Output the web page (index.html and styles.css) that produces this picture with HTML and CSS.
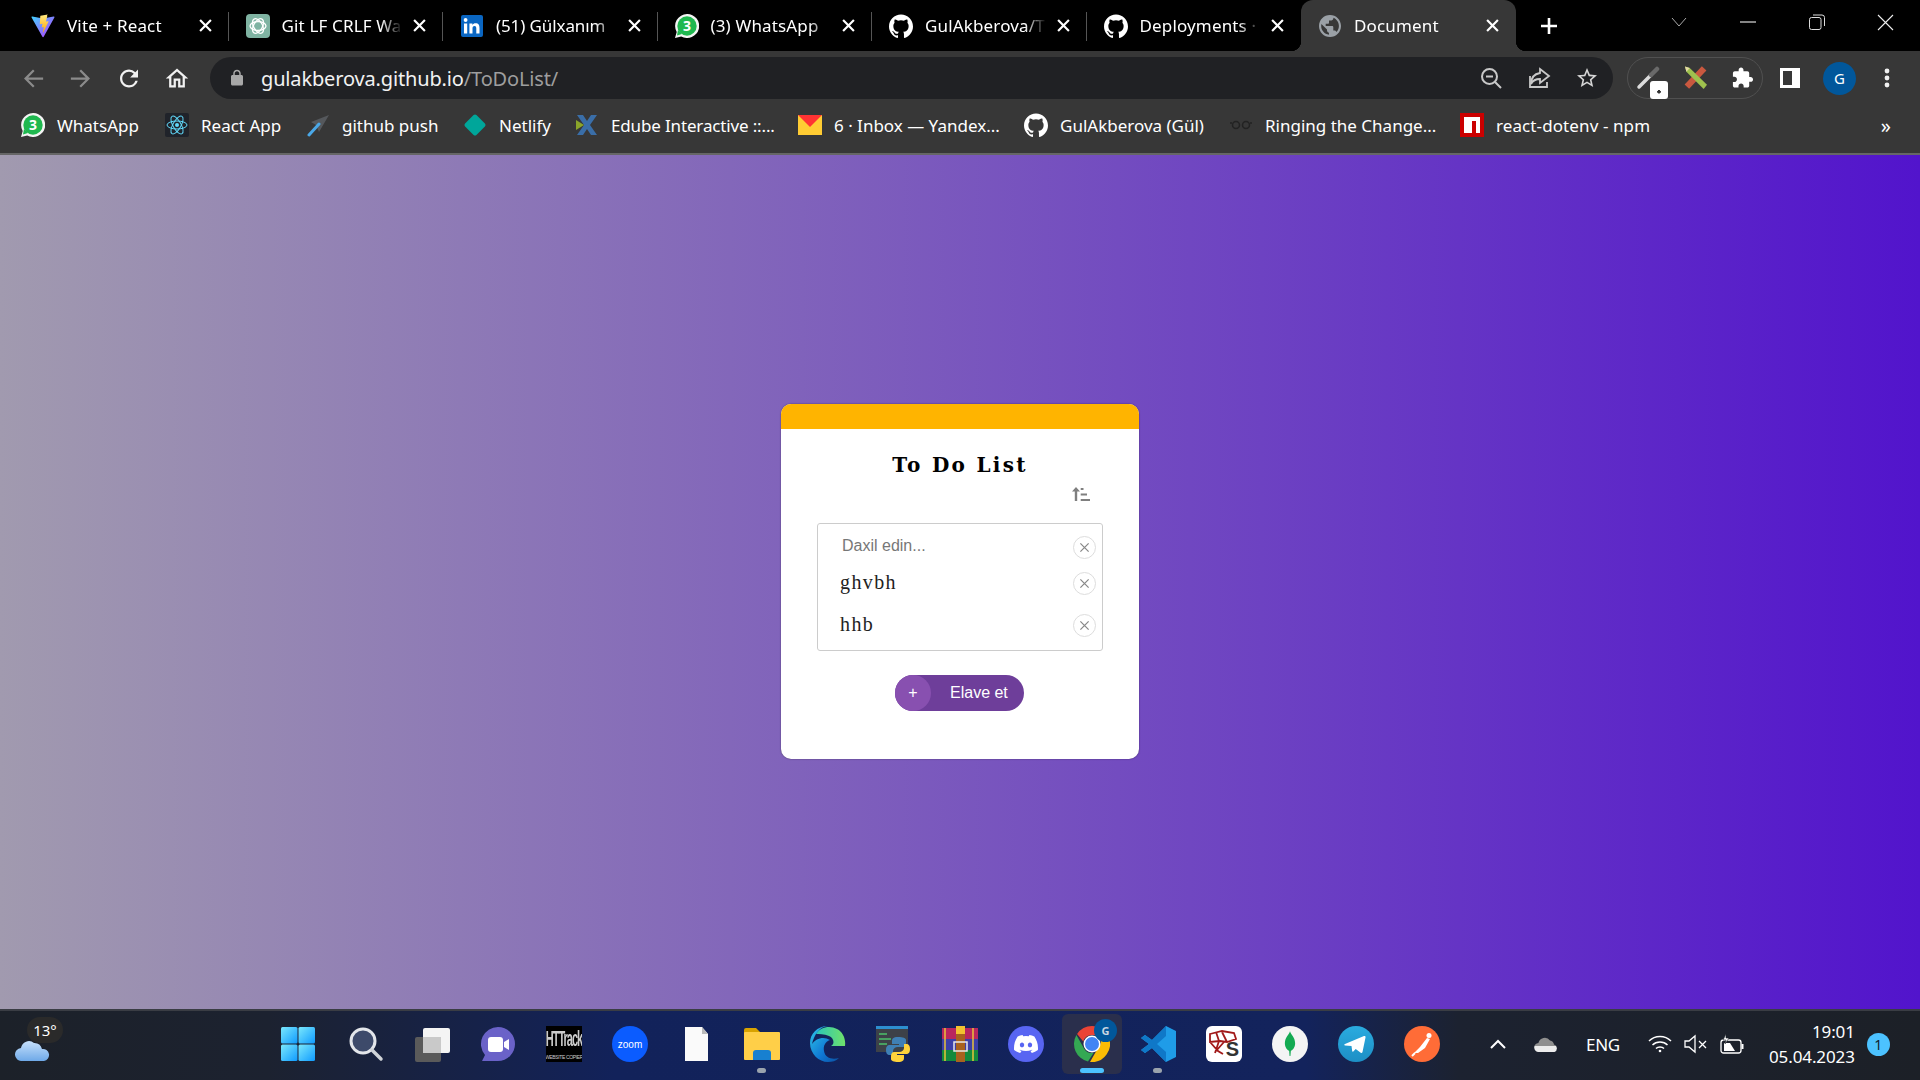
FILE: index.html
```html
<!DOCTYPE html>
<html lang="az">
<head>
<meta charset="utf-8">
<title>Document</title>
<link rel="stylesheet" href="styles.css">
</head>
<body>
<svg class="defs" aria-hidden="true">
  <defs>
    <linearGradient id="vite" x1="0" y1="0" x2="1" y2="1"><stop offset="0" stop-color="#41d1ff"/><stop offset="1" stop-color="#bd34fe"/></linearGradient>
    <linearGradient id="bolt" x1="0" y1="0" x2="0" y2="1"><stop offset="0" stop-color="#ffea83"/><stop offset="1" stop-color="#ffa800"/></linearGradient>
    <linearGradient id="start" x1="0" y1="0" x2="1" y2="1"><stop offset="0" stop-color="#7be8fc"/><stop offset="1" stop-color="#0f9bff"/></linearGradient>
    <linearGradient id="edge" x1="0" y1="0" x2="1" y2="1"><stop offset="0" stop-color="#2fc6e8"/><stop offset=".6" stop-color="#0f78d4"/><stop offset="1" stop-color="#0b4fa0"/></linearGradient>
    <linearGradient id="edge2" x1="0" y1="0" x2="1" y2="0"><stop offset="0" stop-color="#2bc4b8"/><stop offset="1" stop-color="#6fe26a"/></linearGradient>
    <linearGradient id="sky" x1="0" y1="0" x2="0" y2="1"><stop offset="0" stop-color="#c6e0fb"/><stop offset="1" stop-color="#6ea9e8"/></linearGradient>
    <linearGradient id="tele" x1="0" y1="0" x2="0" y2="1"><stop offset="0" stop-color="#2aabdf"/><stop offset="1" stop-color="#1d8fc5"/></linearGradient>
    <linearGradient id="drive" x1="0" y1="0" x2="0" y2="1"><stop offset=".58" stop-color="#8f8f8f"/><stop offset=".6" stop-color="#ececec"/></linearGradient>
    <symbol id="gh" viewBox="0 0 24 24"><path fill="#fff" d="M12 .5C5.37.5 0 5.87 0 12.5c0 5.3 3.44 9.8 8.2 11.4.6.1.82-.26.82-.58v-2.03c-3.34.73-4.04-1.61-4.04-1.61-.55-1.39-1.34-1.76-1.34-1.76-1.09-.75.08-.73.08-.73 1.2.08 1.84 1.24 1.84 1.24 1.07 1.83 2.81 1.3 3.5 1 .1-.78.42-1.31.76-1.61-2.67-.3-5.47-1.33-5.47-5.93 0-1.31.47-2.38 1.24-3.22-.14-.3-.54-1.52.1-3.18 0 0 1-.32 3.3 1.23a11.5 11.5 0 0 1 6 0c2.28-1.55 3.29-1.23 3.29-1.23.64 1.66.24 2.88.12 3.18a4.65 4.65 0 0 1 1.23 3.22c0 4.61-2.8 5.63-5.48 5.92.42.36.81 1.1.81 2.22v3.29c0 .32.22.69.83.57C20.56 22.3 24 17.8 24 12.5 24 5.87 18.63.5 12 .5z"/></symbol>
    <symbol id="wa" viewBox="0 0 24 24"><path fill="#f4f4f4" d="M12 0a12 12 0 0 0-10.3 18L0 24l6.2-1.6A12 12 0 1 0 12 0z"/><circle cx="12" cy="12" r="9.7" fill="#1fb84f"/><path fill="#1fb84f" d="M3 16l-1 5.4 5-1.4z"/><text x="12" y="17" text-anchor="middle" class="wa-num">3</text></symbol>
    <symbol id="xx" viewBox="0 0 12 12"><path d="M1 1l10 10M11 1L1 11" stroke="#fff" stroke-width="2" fill="none"/></symbol>
    <symbol id="del" viewBox="0 0 12 12"><path d="M1.5 1.5l9 9M10.5 1.5l-9 9" stroke="#8a8a8a" stroke-width="1.4" fill="none"/></symbol>
  </defs>
</svg>

<header class="tabstrip">
  <div class="tab">
    <svg class="favicon" viewBox="0 0 24 24"><path fill="url(#vite)" d="M23.4 3.6 12.7 22.8a.7.7 0 0 1-1.3 0L.6 3.6c-.3-.5.2-1.1.7-1L12 4.5l10.6-1.9c.6-.1 1 .5.8 1z"/><path fill="url(#bolt)" d="M16.8.4 9.5 1.8a.3.3 0 0 0-.2.3L8.8 10c0 .2.2.3.3.3l2-.5c.2 0 .4.2.3.4l-.6 3c0 .2.2.4.4.3l1.3-.4c.2 0 .4.1.3.3l-1 4.8c-.1.3.3.5.4.2l.1-.2 5.3-10.6c.1-.2-.1-.4-.3-.4l-2 .4c-.2 0-.4-.2-.3-.4l1.3-5.2c.1-.3-.1-.5-.4-.5z"/></svg>
    <span class="tab-title">Vite + React</span>
    <svg class="tab-x"><use href="#xx"/></svg>
  </div>
  <div class="tab">
    <svg class="favicon" viewBox="0 0 24 24"><rect width="24" height="24" rx="4" fill="#7fb3a2"/><g fill="none" stroke="#fff" stroke-width="1.3"><ellipse cx="12" cy="12" rx="8" ry="4.4"/><ellipse cx="12" cy="12" rx="8" ry="4.4" transform="rotate(60 12 12)"/><ellipse cx="12" cy="12" rx="8" ry="4.4" transform="rotate(120 12 12)"/></g></svg>
    <span class="tab-title">Git LF CRLF Wa</span>
    <svg class="tab-x"><use href="#xx"/></svg>
  </div>
  <div class="tab">
    <svg class="favicon" viewBox="0 0 24 24"><rect x="1" y="1" width="22" height="22" rx="2" fill="#0a66c2"/><rect x="4" y="9.5" width="3.2" height="10" fill="#fff"/><circle cx="5.6" cy="6" r="1.9" fill="#fff"/><path fill="#fff" d="M9.4 9.5h3v1.4c.6-1 1.7-1.7 3.2-1.7 3 0 3.9 2 3.9 4.8v5.5h-3.2v-4.9c0-1.3-.3-2.6-1.8-2.6s-2 1.2-2 2.6v4.9H9.4z"/></svg>
    <span class="tab-title tab-title-plain">(51) Gülxanım</span>
    <svg class="tab-x"><use href="#xx"/></svg>
  </div>
  <div class="tab">
    <svg class="favicon"><use href="#wa"/></svg>
    <span class="tab-title">(3) WhatsApp</span>
    <svg class="tab-x"><use href="#xx"/></svg>
  </div>
  <div class="tab">
    <svg class="favicon"><use href="#gh"/></svg>
    <span class="tab-title">GulAkberova/T</span>
    <svg class="tab-x"><use href="#xx"/></svg>
  </div>
  <div class="tab tab-last">
    <svg class="favicon"><use href="#gh"/></svg>
    <span class="tab-title">Deployments ·</span>
    <svg class="tab-x"><use href="#xx"/></svg>
  </div>
  <div class="tab tab-active">
    <svg class="favicon" viewBox="0 0 24 24"><path fill="#9aa0a6" d="M12 1C5.9 1 1 5.9 1 12s4.9 11 11 11 11-4.9 11-11S18.100 1 12 1zm-1.100 19.700c-4.300-.5-7.700-4.200-7.700-8.700 0-.7.1-1.300.2-2L9 15.500v1.100c0 1.200 1 2.200 2 2.200zm7.600-2.800c-.3-.9-1.100-1.500-2.100-1.500h-1.100v-3.300c0-.6-.5-1.100-1.100-1.100H7.700V9.800h2.200c.6 0 1.100-.5 1.100-1.100V6.500h2.200c1.200 0 2.200-1 2.200-2.200v-.5c3.200 1.300 5.500 4.500 5.500 8.200 0 2.300-.9 4.400-2.400 5.900z"/></svg>
    <span class="tab-title">Document</span>
    <svg class="tab-x"><use href="#xx"/></svg>
  </div>
  <svg class="newtab" viewBox="0 0 20 20"><path d="M10 2v16M2 10h16" stroke="#fff" stroke-width="2.6"/></svg>
  <div class="winctl">
    <span class="winbtn"><svg width="16" height="10" viewBox="0 0 16 10"><path d="M1 1l7 8 7-8" fill="none" stroke="#aaa" stroke-width="1"/></svg></span>
    <span class="winbtn"><svg width="16" height="2" viewBox="0 0 16 2"><path d="M0 1h16" stroke="#ddd" stroke-width="1.2"/></svg></span>
    <span class="winbtn"><svg width="16" height="16" viewBox="0 0 16 16"><rect x=".5" y="3.500" width="11.500" height="12" rx="2" fill="none" stroke="#ddd"/><path d="M4 1h9a2.500 2.500 0 0 1 2.500 2.500V12" fill="none" stroke="#ddd"/></svg></span>
    <span class="winbtn"><svg width="17" height="17" viewBox="0 0 17 17"><path d="M1 1l15 15M16 1L1 16" stroke="#eee" stroke-width="1.1"/></svg></span>
  </div>
</header>

<nav class="toolbar">
  <svg class="navicon" viewBox="0 0 24 24"><path fill="#8b8b8b" d="M21 11H7.800l5.600-5.600L12 4l-8 8 8 8 1.400-1.400L7.800 13H21z"/></svg>
  <svg class="navicon" viewBox="0 0 24 24"><path fill="#8b8b8b" d="M3 11h13.200l-5.600-5.600L12 4l8 8-8 8-1.400-1.400 5.600-5.600H3z"/></svg>
  <svg class="navicon" viewBox="0 0 24 24"><path fill="#f1f1f1" d="M17.650 6.350A7.958 7.958 0 0 0 12 4c-4.420 0-7.990 3.580-7.990 8s3.570 8 7.990 8c3.730 0 6.840-2.550 7.730-6h-2.080A5.990 5.990 0 0 1 12 18c-3.310 0-6-2.690-6-6s2.690-6 6-6c1.660 0 3.140.690 4.220 1.780L13 11h7V4l-2.350 2.350z"/></svg>
  <svg class="navicon" viewBox="0 0 24 24"><path fill="#f1f1f1" d="M12 5.690l5 4.500V18h-2v-6H9v6H7v-7.810l5-4.500M12 3 2 12h3v8h6v-6h2v6h6v-8h3L12 3z"/></svg>
  <div class="omnibox">
    <svg class="lock" viewBox="0 0 24 24"><path fill="#a8a8a8" d="M18 8h-1V6c0-2.760-2.240-5-5-5S7 3.240 7 6v2H6c-1.100 0-2 .9-2 2v10c0 1.100.9 2 2 2h12c1.100 0 2-.9 2-2V10c0-1.100-.9-2-2-2zM9 6c0-1.660 1.340-3 3-3s3 1.340 3 3v2H9V6z"/></svg>
    <span class="url">gulakberova.github.io<span class="url-path">/ToDoList/</span></span>
    <div class="omni-actions">
      <svg class="omni-icon" viewBox="0 0 24 24" fill="none" stroke="#c8c8c8" stroke-width="2"><circle cx="10.500" cy="10.500" r="7.500"/><path d="M16 16l6 6M7 10.500h7"/></svg>
      <svg class="omni-icon" viewBox="0 0 24 24" fill="none" stroke="#c8c8c8" stroke-width="1.800"><path d="M3 10v11h17v-5"/><path d="M13 3l9 7-9 7v-4c-4 0-7 1-9 5 0-6 3-10 9-11z"/></svg>
      <svg class="omni-icon" viewBox="0 0 24 24"><path fill="#d6d6d6" d="M22 9.240l-7.190-.62L12 2 9.190 8.630 2 9.240l5.460 4.730L5.820 21 12 17.270 18.180 21l-1.630-7.030L22 9.240zM12 15.400l-3.760 2.270 1-4.280-3.320-2.880 4.380-.38L12 6.100l1.710 4.040 4.380.38-3.320 2.880 1 4.280L12 15.400z"/></svg>
    </div>
  </div>
  <div class="ext-pill">
    <span class="ext">
      <svg class="ext-icon" viewBox="0 0 24 24"><path d="M3 21L15 9" stroke="#dcdcdc" stroke-width="3.500" stroke-linecap="round"/><path d="M15 9l6-6" stroke="#6a6a6a" stroke-width="4.500" stroke-linecap="round"/></svg>
      <span class="ext-badge"></span>
    </span>
    <svg class="ext-icon" viewBox="0 0 24 24"><path d="M21 2L3 21" stroke="#c9583f" stroke-width="6.500"/><path d="M1 0l5 1.500L24 19l-3.500 4.500L2.500 5.500z" fill="#9fc14e"/><path d="M1 0l5 1.500-3.500 4z" fill="#e4d9a5"/></svg>
    <svg class="ext-icon" viewBox="0 0 24 24"><path fill="#fff" d="M20.500 11H19V7c0-1.100-.9-2-2-2h-4V3.500C13 2.120 11.880 1 10.500 1S8 2.120 8 3.500V5H4c-1.100 0-1.990.9-1.990 2v3.800H3.500c1.490 0 2.700 1.210 2.700 2.700s-1.210 2.700-2.700 2.700H2V20c0 1.100.9 2 2 2h3.800v-1.500c0-1.490 1.210-2.700 2.700-2.700 1.490 0 2.700 1.210 2.700 2.700V22H17c1.100 0 2-.9 2-2v-4h1.500c1.380 0 2.500-1.120 2.500-2.500S21.880 11 20.500 11z"/></svg>
  </div>
  <svg class="tool-panel" viewBox="0 0 24 24"><path fill="#fff" fill-rule="evenodd" d="M2 2h20v20H2zM5 5v14h9V5z"/></svg>
  <span class="avatar">G</span>
  <svg class="tool-dots" viewBox="0 0 24 24"><circle cx="12" cy="5" r="2.400" fill="#f1f1f1"/><circle cx="12" cy="12" r="2.400" fill="#f1f1f1"/><circle cx="12" cy="19" r="2.400" fill="#f1f1f1"/></svg>
</nav>

<div class="bookmarks">
  <a class="bm bm-wa"><svg class="bm-icon"><use href="#wa"/></svg>WhatsApp</a>
  <a class="bm bm-react"><svg class="bm-icon" viewBox="0 0 24 24"><rect width="24" height="24" rx="2" fill="#20232a"/><g fill="none" stroke="#61dafb" stroke-width="1"><ellipse cx="12" cy="12" rx="10" ry="4"/><ellipse cx="12" cy="12" rx="10" ry="4" transform="rotate(60 12 12)"/><ellipse cx="12" cy="12" rx="10" ry="4" transform="rotate(120 12 12)"/></g><circle cx="12" cy="12" r="2" fill="#61dafb"/></svg>React App</a>
  <a class="bm bm-push"><svg class="bm-icon" viewBox="0 0 24 24"><path fill="#55585c" d="M23 2L5 9l5 3 3 7z"/><path d="M13 11L3 22" stroke="#4aa8e8" stroke-width="3" stroke-linecap="round"/></svg>github push</a>
  <a class="bm bm-net"><svg class="bm-icon" viewBox="0 0 24 24"><rect x="4" y="4" width="16" height="16" rx="2" fill="#00a69a" transform="rotate(45 12 12)"/></svg>Netlify</a>
  <a class="bm bm-edu"><svg class="bm-icon" viewBox="0 0 24 24"><path fill="#3a6ea8" d="M2 2h6l4 6 4-6h6l-7 10 7 10h-6l-4-6-4 6H2l7-10z"/><path fill="#8aa52a" d="M1 7l8 5-8 5z"/></svg>Edube Interactive ::...</a>
  <a class="bm bm-mail"><svg class="bm-icon" viewBox="0 0 24 24"><rect y="2" width="24" height="20" fill="#fc3"/><path fill="#f33" d="M0 2h24L12 14z"/></svg>6 · Inbox — Yandex...</a>
  <a class="bm bm-gh"><svg class="bm-icon"><use href="#gh"/></svg>GulAkberova (Gül)</a>
  <a class="bm bm-ring"><svg class="bm-icon" viewBox="0 0 24 24" fill="none" stroke="#222" stroke-width="1.500"><circle cx="7" cy="12" r="3.500"/><circle cx="17" cy="12" r="3.500"/><path d="M1 10h2M21 10h2"/></svg>Ringing the Change...</a>
  <a class="bm bm-npm"><svg class="bm-icon" viewBox="0 0 24 24"><rect width="24" height="24" fill="#cb0000"/><path fill="#fff" d="M4 4h16v16h-4V8h-4v12H4z"/></svg>react-dotenv - npm</a>
  <span class="bm-more">»</span>
</div>

<main class="page">
  <section class="card">
    <div class="card-top"></div>
    <h1 class="card-title">To Do List</h1>
    <div class="sort-row">
      <svg class="sort" viewBox="0 0 18 14"><path fill="#7f7f7f" d="M2.800 14V4.500H0L4 0l4 4.500H5.200V14z"/><path stroke="#7f7f7f" stroke-width="2" d="M8.700 2h2.800M8.700 7.500H15M8.700 13H18"/></svg>
    </div>
    <div class="list">
      <div class="row row-input"><span class="placeholder">Daxil edin...</span><span class="del"><svg class="del-x"><use href="#del"/></svg></span></div>
      <div class="row"><span class="item">ghvbh</span><span class="del"><svg class="del-x"><use href="#del"/></svg></span></div>
      <div class="row row-last"><span class="item">hhb</span><span class="del"><svg class="del-x"><use href="#del"/></svg></span></div>
    </div>
    <button class="add"><span class="add-plus">+</span><span class="add-label">Elave et</span></button>
  </section>
</main>

<footer class="taskbar">
  <div class="weather">
    <span class="sun"></span>
    <svg class="cloud" viewBox="0 0 36 24"><path fill="url(#sky)" d="M7 24a6.500 6.500 0 0 1-1-13 8 8 0 0 1 13-5 8 8 0 0 1 8 6 6 6 0 0 1 2 12z"/></svg>
    <span class="temp">13°</span>
  </div>
  <div class="apps">
    <span class="app app-start"><svg class="ico" viewBox="0 0 36 36"><g fill="url(#start)"><rect x="1" y="1" width="16.500" height="16.500" rx="1.500"/><rect x="18.500" y="1" width="16.500" height="16.500" rx="1.500"/><rect x="1" y="18.500" width="16.500" height="16.500" rx="1.500"/><rect x="18.500" y="18.500" width="16.500" height="16.500" rx="1.500"/></g></svg></span>
    <span class="app"><svg class="ico" viewBox="0 0 36 36"><circle cx="15" cy="15" r="12" fill="#3d4a6a" stroke="#e3e6ea" stroke-width="3"/><path d="M24 24l9 9" stroke="#d0d4d8" stroke-width="3.500" stroke-linecap="round"/></svg></span>
    <span class="app"><svg class="ico" viewBox="0 0 36 36"><rect x="1" y="11" width="26" height="25" rx="2" fill="#5a5a5a"/><rect x="9" y="2" width="27" height="25" rx="2" fill="#f4f4f4"/><rect x="9" y="11" width="18" height="16" fill="#c9c9c9"/></svg></span>
    <span class="app"><svg class="ico" viewBox="0 0 36 36"><path fill="#6a62c8" d="M18 1a17 17 0 0 1 0 34H2l3-6A17 17 0 0 1 18 1z"/><rect x="8" y="11" width="15" height="15" rx="3" fill="#fff"/><path fill="#fff" d="M24 16l5-3v11l-5-3z"/></svg></span>
    <span class="app"><span class="httrack"><span class="ht-top">HTTrack</span><span class="ht-sub">WEBSITE COPIER</span></span></span>
    <span class="app"><span class="zoom">zoom</span></span>
    <span class="app"><svg class="ico" viewBox="0 0 36 36"><path fill="#fafafa" d="M7 1h17l6 7v27H7z"/><path fill="#bbb" d="M24 1l6 7h-6z"/></svg></span>
    <span class="app app-open"><svg class="ico" viewBox="0 0 36 36"><path fill="#d9a300" d="M0 4a2 2 0 0 1 2-2h10l4 4h18v6H0z"/><rect y="6" width="36" height="28" rx="1" fill="#ffcf48"/><path fill="#1780d0" d="M9 34v-7a3 3 0 0 1 3-3h12a3 3 0 0 1 3 3v7z"/></svg></span>
    <span class="app"><svg class="ico" viewBox="0 0 36 36"><path fill="url(#edge2)" d="M6 8C10 1 20-1 27 3c6 3 9 10 8 17h-14c4-2 3-8-2-10-5-2-10-2-13-2z"/><path fill="url(#edge)" d="M18 0C7 0 0 8 0 17c0 11 9 19 18 19 4 0 8-1 11-4-7 2-14 0-15-7-1-5 1-9 6-11-6-4-14-2-18 4C4 9 10 0 18 0z"/></svg></span>
    <span class="app"><svg class="ico" viewBox="0 0 36 36"><rect x="0" y="0" width="32" height="26" fill="#3d4148"/><rect x="0" y="0" width="32" height="3" fill="#2d8fd0"/><path d="M3 8h8M3 13h12M3 18h8" stroke="#4cc06a" stroke-width="1.500"/><path fill="#3f7fb5" d="M22 11c-5 0-6 2-6 4v3h7v1h-9c-3 0-4 2-4 5s1 5 4 5h3v-4c0-2 2-4 5-4h5c2 0 3-2 3-4v-3c0-2-3-3-8-3z"/><path fill="#ffd43b" d="M22 36c5 0 6-2 6-4v-3h-7v-1h9c3 0 4-2 4-5s-1-5-4-5h-2v4c0 2-2 4-5 4h-5c-2 0-3 2-3 4v3c0 2 3 3 7 3z"/></svg></span>
    <span class="app"><svg class="ico" viewBox="0 0 36 36"><rect y="2" width="36" height="11" fill="#b9265e"/><rect y="13" width="36" height="11" fill="#3b3fa8"/><rect y="24" width="36" height="11" fill="#138a3c"/><path d="M3 2v33M31 2v33" stroke="#e8c23a" stroke-width="1.500"/><rect x="14" y="0" width="9" height="36" fill="#a8621e"/><rect x="12" y="16" width="13" height="9" fill="none" stroke="#e8e8e8" stroke-width="1.500"/><path fill="#f2c230" d="M14 0h9v8h-9z"/></svg></span>
    <span class="app"><svg class="ico" viewBox="0 0 36 36"><circle cx="18" cy="18" r="18" fill="#5865f2"/><svg x="6" y="8" width="24" height="20" viewBox="0 0 127.140 96.360"><path fill="#fff" d="M107.700 8.070A105.150 105.150 0 0 0 81.470 0a72.060 72.060 0 0 0-3.360 6.830 97.680 97.680 0 0 0-29.110 0A72.370 72.370 0 0 0 45.640 0a105.890 105.890 0 0 0-26.250 8.090C2.790 32.650-1.710 56.600.54 80.210a105.730 105.730 0 0 0 32.170 16.150 77.700 77.700 0 0 0 6.890-11.110 68.420 68.420 0 0 1-10.850-5.180c.91-.66 1.800-1.340 2.660-2a75.570 75.570 0 0 0 64.320 0c.87.710 1.760 1.390 2.660 2a68.680 68.680 0 0 1-10.870 5.190 77 77 0 0 0 6.890 11.100 105.250 105.250 0 0 0 32.190-16.140c2.640-27.380-4.510-51.110-18.900-72.150zM42.450 65.690C36.180 65.690 31 60 31 53s5-12.740 11.430-12.740S54 46 53.890 53s-5.050 12.690-11.440 12.690zm42.240 0C78.410 65.690 73.250 60 73.250 53s5-12.740 11.440-12.740S96.230 46 96.120 53s-5.040 12.690-11.430 12.690z"/></svg></svg></span>
    <span class="app app-active">
      <svg class="ico" viewBox="0 0 36 36"><path fill="#ea4335" d="M18 0a18 18 0 0 1 15.600 9H18a9 9 0 0 0-8.700 6.600L3.100 8A18 18 0 0 1 18 0z"/><path fill="#34a853" d="M2.400 9L10 22.500a9 9 0 0 0 9.700 4.300L14 35.500A18 18 0 0 1 2.400 9z"/><path fill="#fbbc04" d="M34 10a18 18 0 0 1-18 26l7.700-13.500A9 9 0 0 0 25 10z"/><circle cx="18" cy="18" r="8.500" fill="#fff"/><circle cx="18" cy="18" r="7" fill="#4285f4"/></svg>
      <span class="chrome-badge">G</span>
    </span>
    <span class="app app-open"><svg class="ico" viewBox="0 0 36 36"><path fill="#1f9ce8" d="M26 0l10 5v26l-10 5-14-14-7 5-4-3 8-6-8-6 4-3 7 5z"/><path fill="#0f78c8" d="M26 0L12 14l-7-5-4 3 8 6-8 6 4 3 7-5 14 14V26l-9-8 9-8z"/></svg></span>
    <span class="app"><span class="sublime"><svg class="sub-mesh" viewBox="0 0 30 30" fill="none" stroke="#a21a1a" stroke-width="1.800"><path d="M2 6l12-3 12 2 2 6-9 3-7-1-10 1zM8 4l3 9-4 12M2 14l8 9 5 3M16 14l-8 9M19 14l-5-10"/></svg><span class="sub-s">S</span></span></span>
    <span class="app"><span class="mongo"><svg class="leaf" viewBox="0 0 14 30"><path fill="#13aa52" d="M7 0c1 4 6 7 6 14 0 5-3 8-5 9l-.500 6H6.500L6 23c-2-1-5-4-5-9C1 7 6 4 7 0z"/></svg></span></span>
    <span class="app"><svg class="ico" viewBox="0 0 36 36"><circle cx="18" cy="18" r="18" fill="url(#tele)"/><path fill="#fff" d="M7 18l19-8c1-.4 1.800.2 1.500 1.600L24.500 26c-.2 1-1 1.300-1.800.8l-5-3.700-2.400 2.300c-.5.500-1 .4-1.100-.3l-.7-5.100L7 19.500c-.9-.4-.9-1.100 0-1.500z"/></svg></span>
    <span class="app"><svg class="ico" viewBox="0 0 36 36"><circle cx="18" cy="18" r="18" fill="#ff6c37"/><path d="M10 27l6-6 7-9 3 1-5 9-7 5z" fill="#fff"/><circle cx="25" cy="9.500" r="2.500" fill="#fff"/><path d="M8 30l3-3" stroke="#fff" stroke-width="2"/></svg></span>
  </div>
  <div class="tray">
    <svg class="tray-chev" viewBox="0 0 16 10"><path d="M1 9l7-7 7 7" fill="none" stroke="#fff" stroke-width="2"/></svg>
    <svg class="tray-cloud" viewBox="0 0 24 16"><path fill="url(#drive)" d="M5 16a4.500 4.500 0 0 1-.6-9A6.500 6.500 0 0 1 16 4.500a5 5 0 0 1 4 4A4 4 0 0 1 20.500 16z"/></svg>
    <span class="lang">ENG</span>
    <svg class="tray-ico tray-wifi" viewBox="0 0 24 18" fill="none" stroke="#fff" stroke-width="1.500"><path d="M1 6c6-6 16-6 22 0M4.500 10c4-4 11-4 15 0M8 13.500c2-2 6-2 8 0"/><circle cx="12" cy="16" r="1.300" fill="#fff" stroke="none"/></svg>
    <svg class="tray-ico tray-vol" viewBox="0 0 24 18" fill="none" stroke="#fff" stroke-width="1.300"><path d="M1 6h4l6-5v16l-6-5H1zM15 6l7 7M22 6l-7 7"/></svg>
    <svg class="tray-ico tray-bat" viewBox="0 0 24 20" fill="none" stroke="#fff" stroke-width="1.300"><rect x="1" y="6" width="20" height="13" rx="2.500"/><path d="M22.500 10v5" stroke-width="2"/><path d="M4 17V9h6l5 8z" fill="#fff" stroke="none"/><path d="M6 0L3 6h3l-1 4 4-6H6z" fill="#fff" stroke="#1c2129" stroke-width=".6"/></svg>
    <div class="clock"><span>19:01</span><span>05.04.2023</span></div>
    <span class="notif">1</span>
  </div>
</footer>
</body>
</html>
```
FILE: styles.css
```css
* { box-sizing: border-box; }
html, body { margin: 0; height: 100%; }
body {
  display: flex;
  flex-direction: column;
  width: 1920px;
  height: 1080px;
  overflow: hidden;
  font-family: "Noto Sans", "Open Sans", sans-serif;
  color: #fff;
  background: #000;
}
.defs { position: absolute; width: 0; height: 0; }
.wa-num { fill: #fff; font: 700 14px "Noto Sans", sans-serif; }

/* Tab strip */
.tabstrip {
  display: flex;
  align-items: stretch;
  flex: 0 0 51px;
  height: 51px;
  padding-left: 14px;
  background: #000;
}
.tab {
  position: relative;
  display: flex;
  align-items: center;
  flex: 0 0 214.500px;
  width: 214.500px;
  min-width: 0;
  padding: 0 17px 0 17px;
  font-size: 17px;
  letter-spacing: .15px;
}
.tab::after {
  content: "";
  position: absolute;
  right: 0;
  top: 12px;
  height: 29px;
  width: 1px;
  background: #555;
}
.tab-last::after, .tab-active::after { display: none; }
.tab-active {
  background: #373737;
  border-radius: 12px 12px 0 0;
}
.tab-active::before {
  content: "";
  position: absolute;
  left: -10px;
  right: -10px;
  bottom: 0;
  height: 10px;
  background:
    radial-gradient(circle at 0 0, #000 10px, #373737 10.500px) left bottom / 10px 10px no-repeat,
    radial-gradient(circle at 100% 0, #000 10px, #373737 10.500px) right bottom / 10px 10px no-repeat;
}
.favicon { position: relative; flex: 0 0 24px; width: 24px; height: 24px; }
.tab-title {
  position: relative;
  flex: 1;
  min-width: 0;
  margin-left: 12px;
  white-space: nowrap;
  overflow: hidden;
  -webkit-mask-image: linear-gradient(to right, #000 80%, transparent 98%);
  mask-image: linear-gradient(to right, #000 80%, transparent 98%);
}
.tab-title-plain { letter-spacing: -.1px; }
.tab-x { position: relative; flex: 0 0 13px; width: 13px; height: 13px; margin-left: 8px; }
.newtab { align-self: center; width: 20px; height: 20px; margin-left: 23px; }
.winctl { display: flex; margin-left: auto; height: 44px; }
.winbtn { display: flex; align-items: center; justify-content: center; width: 69px; }

/* Toolbar */
.toolbar {
  display: flex;
  align-items: center;
  flex: 0 0 54px;
  height: 54px;
  padding: 0 21px 0 9px;
  background: #373737;
}
.toolbar > .navicon { flex: 0 0 48px; width: 48px; height: 27px; }
.omnibox {
  display: flex;
  align-items: center;
  width: 1403px;
  height: 42px;
  margin-left: 9px;
  padding: 0 14px 0 18px;
  border-radius: 21px;
  background: #202124;
}
.lock { width: 18px; height: 18px; }
.url { margin-left: 15px; font-size: 20px; letter-spacing: -.15px; color: #f2f2f2; }
.url-path { color: #9e9e9e; }
.omni-actions { display: flex; gap: 24px; margin-left: auto; }
.omni-icon { width: 24px; height: 24px; }
.ext-pill {
  position: relative;
  display: flex;
  align-items: center;
  gap: 24px;
  width: 136px;
  height: 42px;
  margin-left: 14px;
  padding: 0 8px;
  border: 1.500px solid #505050;
  border-radius: 21px;
}
.ext { position: relative; width: 24px; height: 24px; }
.ext-icon { width: 24px; height: 24px; }
.ext-badge {
  position: absolute;
  left: 14px;
  top: 15px;
  width: 18px;
  height: 18px;
  border-radius: 3px;
  background: radial-gradient(circle at 50% 60%, #333 1.500px, #fff 2px);
}
.tool-panel { width: 24px; height: 24px; margin-left: 15px; }
.avatar {
  display: flex;
  align-items: center;
  justify-content: center;
  width: 33px;
  height: 33px;
  margin-left: 21px;
  border-radius: 50%;
  background: #01579b;
  font-size: 15px;
}
.tool-dots { width: 24px; height: 24px; margin-left: 19px; }

/* Bookmarks */
.bookmarks {
  display: flex;
  align-items: center;
  flex: 0 0 50px;
  height: 50px;
  padding: 0 0 8px 21px;
  background: #373737;
  border-bottom: 2px solid #666;
  font-size: 17px;
}
.bm { display: flex; align-items: center; gap: 12px; white-space: nowrap; }
.bm-icon { flex: 0 0 24px; width: 24px; height: 24px; }
.bm-wa { flex: 0 0 144px; }
.bm-react { flex: 0 0 141px; }
.bm-push { flex: 0 0 157px; }
.bm-net { flex: 0 0 112px; }
.bm-edu { flex: 0 0 223px; letter-spacing: -.15px; }
.bm-mail { flex: 0 0 226px; }
.bm-gh { flex: 0 0 205px; }
.bm-ring { flex: 0 0 231px; }
.bm-npm { flex: 0 0 auto; letter-spacing: .1px; }
.bm-more { margin-left: auto; margin-right: 29px; font-size: 20px; }

/* Page */
.page {
  flex: 1;
  display: flex;
  align-items: center;
  justify-content: center;
  padding-bottom: 1px;
  background: linear-gradient(to right, #a19aaf, #5214cc);
}
.card {
  display: flex;
  flex-direction: column;
  width: 358px;
  height: 355px;
  overflow: hidden;
  border-radius: 10px;
  background: #fff;
  box-shadow: 0 0 1.500px rgba(0, 0, 0, .6);
  color: #000;
}
.card-top { flex: 0 0 25px; background: #ffb400; }
.card-title {
  margin: 21px 0 0;
  height: 30px;
  font: bold 20px/30px "DejaVu Serif", "Liberation Serif", serif;
  letter-spacing: 2.300px;
  text-align: center;
}
.sort-row { display: flex; justify-content: flex-end; margin: 7px 49px 0 0; height: 14px; }
.sort { width: 18px; height: 14px; }
.list {
  display: flex;
  flex-direction: column;
  height: 128px;
  margin: 22px 36px 0;
  padding: 5px 6px 0 22px;
  border: 1px solid #ccc;
  border-radius: 3px;
}
.row {
  display: flex;
  align-items: center;
  justify-content: space-between;
  height: 36px;
}
.row-last { margin-top: 6px; }
.placeholder { margin-left: 2px; margin-top: -2px; font: 16px "Liberation Sans", Arial, sans-serif; color: #777; }
.item { margin-top: -2px; font: 20px "Liberation Serif", "Times New Roman", serif; letter-spacing: 1.400px; color: #222; }
.del {
  display: flex;
  align-items: center;
  justify-content: center;
  width: 23px;
  height: 23px;
  border: 1px solid #ddd;
  border-radius: 50%;
}
.del-x { width: 11px; height: 11px; }
.add {
  display: flex;
  align-items: center;
  align-self: center;
  width: 129px;
  height: 36px;
  margin: 24px 1px 0 0;
  padding: 0;
  border: 0;
  border-radius: 18px;
  background: #6e3e9a;
  color: #fff;
  font: 16px "Liberation Sans", Arial, sans-serif;
}
.add-plus {
  display: flex;
  align-items: center;
  justify-content: center;
  width: 36px;
  height: 36px;
  border-radius: 18px;
  background: #8850b0;
}
.add-label { margin-left: 19px; }

/* Taskbar */
.taskbar {
  display: flex;
  align-items: flex-start;
  flex: 0 0 71px;
  height: 71px;
  border-top: 2px solid #3a3d44;
  background: linear-gradient(to right, #1c2129 0%, #1c2230 14%, #12225a 32%, #13235c 68%, #1c2230 76%, #1c2027 100%);
}
.weather { position: relative; flex: 0 0 267px; height: 66px; }
.sun { position: absolute; left: 41px; top: 22px; width: 8px; height: 8px; background: #e07a1f; }
.cloud { position: absolute; left: 15px; top: 26px; width: 36px; height: 24px; }
.temp {
  position: absolute;
  left: 27px;
  top: 6px;
  width: 36px;
  height: 26px;
  border-radius: 13px;
  background: #2a2a2a;
  font-size: 15px;
  line-height: 26px;
  text-align: center;
}
.apps { display: flex; }
.app {
  position: relative;
  display: flex;
  align-items: center;
  justify-content: center;
  width: 66px;
  height: 66px;
}
.app-start .ico { margin-right: 4px; }
.ico { width: 36px; height: 36px; }
.app-open::after {
  content: "";
  position: absolute;
  left: 28px;
  top: 57px;
  width: 9px;
  height: 5px;
  border-radius: 3px;
  background: #9aa3ad;
}
.app-active::before {
  content: "";
  position: absolute;
  left: 3px;
  top: 3px;
  width: 60px;
  height: 60px;
  border-radius: 6px;
  background: #2a2f4c;
}
.app-active::after {
  content: "";
  position: absolute;
  left: 21px;
  top: 57px;
  width: 24px;
  height: 5px;
  border-radius: 3px;
  background: #4cc2ff;
}
.app-active .ico { position: relative; }
.chrome-badge {
  position: absolute;
  left: 35px;
  top: 8px;
  width: 23px;
  height: 23px;
  border-radius: 50%;
  background: #01579b;
  color: #c9d6e2;
  font-size: 11px;
  font-weight: 700;
  line-height: 23px;
  text-align: center;
}
.httrack {
  display: flex;
  flex-direction: column;
  align-items: center;
  width: 36px;
  height: 36px;
  overflow: hidden;
  background: #000;
  color: #ccc;
  font-family: "Liberation Sans", sans-serif;
}
.ht-top {
  height: 27px;
  font-size: 11px;
  font-weight: 700;
  line-height: 13px;
  letter-spacing: -1px;
  transform: scaleY(2);
  transform-origin: top;
}
.ht-sub { font-size: 5px; line-height: 8px; white-space: nowrap; letter-spacing: -.35px; }
.zoom {
  display: flex;
  align-items: center;
  justify-content: center;
  width: 36px;
  height: 36px;
  border-radius: 50%;
  background: #0b5cff;
  font: 10px "Liberation Sans", sans-serif;
}
.sublime {
  position: relative;
  width: 36px;
  height: 36px;
  border-radius: 6px;
  background: #fff;
}
.sub-mesh { position: absolute; left: 2px; top: 2px; width: 30px; height: 30px; }
.sub-s {
  position: absolute;
  right: 3px;
  bottom: 1px;
  color: #333;
  font: bold 20px "Liberation Sans", sans-serif;
}
.mongo {
  display: flex;
  align-items: center;
  justify-content: center;
  width: 36px;
  height: 36px;
  border-radius: 50%;
  background: #f4f4f4;
}
.leaf { width: 12px; height: 28px; }
.tray { display: flex; align-items: center; flex: 1; height: 66px; padding-left: 35px; }
.tray-chev { width: 16px; height: 10px; }
.tray-cloud { width: 24px; height: 16px; margin-left: 28px; }
.lang { margin-left: 28px; font-size: 17px; letter-spacing: -.3px; }
.tray-ico { height: 20px; }
.tray-wifi { width: 24px; margin-left: 28px; }
.tray-vol { width: 24px; margin-left: 12px; }
.tray-bat { width: 24px; margin-left: 12px; }
.clock {
  display: flex;
  flex-direction: column;
  align-items: flex-end;
  width: 100px;
  margin-left: 11px;
  font-size: 17px;
  line-height: 25px;
  letter-spacing: -.1px;
}
.notif {
  width: 23px;
  height: 23px;
  margin-left: 12px;
  border-radius: 50%;
  background: #4cc2ff;
  color: #10202c;
  font-size: 14px;
  line-height: 23px;
  text-align: center;
}
```
